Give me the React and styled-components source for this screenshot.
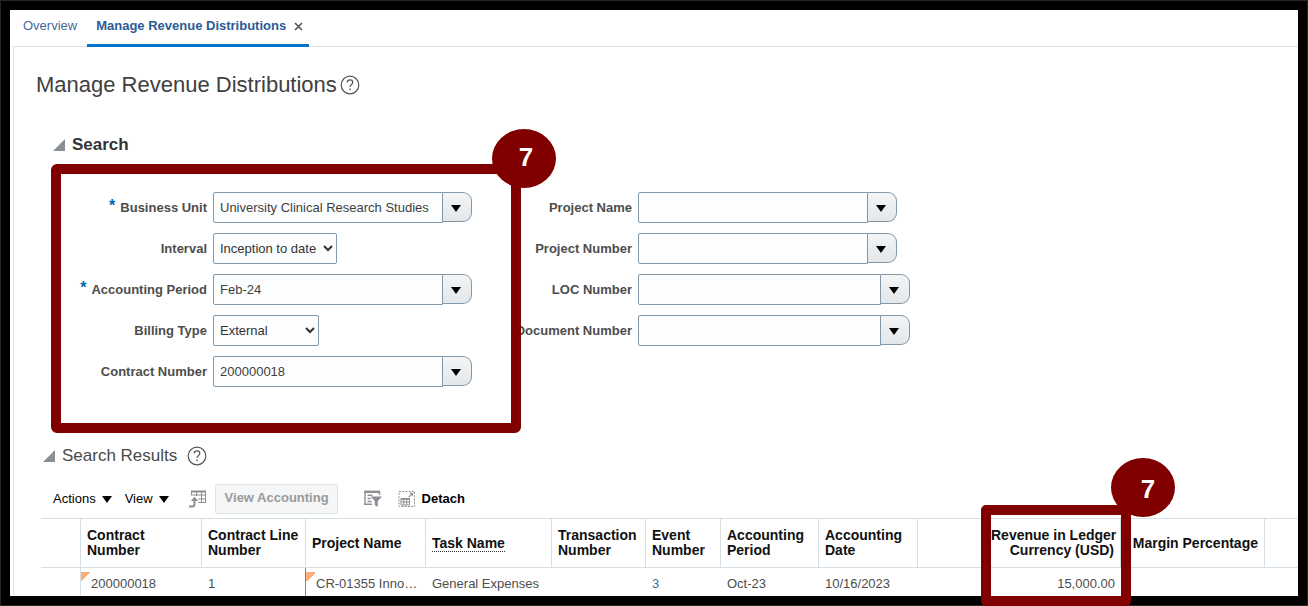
import React, { useState } from 'react';
import styled, { createGlobalStyle } from 'styled-components';

const GlobalStyle = createGlobalStyle`
  * {
    box-sizing: border-box;
  }
  body {
    margin: 0;
    background-color: #ffffff;
    font-family: 'Liberation Sans', Arial, sans-serif;
    font-size: 13px;
    line-height: 20px;
    color: #4d4d4d;
  }
  button, input, select {
    font: inherit;
    margin: 0;
  }
`;

const Frame = styled.div`
  min-height: 100vh;
  display: flex;
  flex-direction: column;
  border: 10px solid #000000;
  outline: 1px solid #262626;
  outline-offset: -1px;
`;

const TabBar = styled.nav`
  display: flex;
  height: 37px;
  padding-left: 3px;
`;

const Tab = styled.div`
  display: flex;
  align-items: flex-start;
  gap: 8px;
  padding: 6px ${({ $active }) => ($active ? '6px' : '10px')} 0
    ${({ $active }) => ($active ? '9px' : '10px')};
  border-bottom: 3px solid ${({ $active }) => ($active ? '#0572ce' : 'transparent')};
  position: relative;
`;

const TabLink = styled.a`
  color: ${({ $active }) => ($active ? '#2a5c96' : '#45699b')};
  font-weight: ${({ $active }) => ($active ? 'bold' : 'normal')};
  text-decoration: none;
`;

const CloseButton = styled.button`
  display: flex;
  align-items: center;
  height: 21px;
  padding: 0;
  border: none;
  background: none;
`;

const Panel = styled.main`
  flex: 1;
  margin: -1px 0 0 3px;
  padding-top: 23px;
  border-top: 1px solid #dbe3ea;
  border-left: 1px solid #dbe3ea;
`;

const PageTitle = styled.h1`
  display: flex;
  align-items: center;
  gap: 3px;
  margin: 0 0 35px 22px;
  font-size: 22px;
  font-weight: normal;
  line-height: 30px;
  color: #404040;
`;

const HelpButton = styled.button`
  display: flex;
  padding: 0;
  border: none;
  background: none;
`;

const SectionHeader = styled.div`
  display: flex;
  align-items: center;
  gap: 7px;
  height: 20px;
  margin-left: ${({ $indent }) => $indent};
`;

const SectionTitle = styled.h2`
  margin: 0 3px 0 0;
  font-size: 17px;
  font-weight: ${({ $bold }) => ($bold ? 'bold' : 'normal')};
  line-height: 20px;
  color: ${({ $bold }) => ($bold ? '#333333' : '#4a4a4a')};
`;

const DiscloseButton = styled.button`
  display: flex;
  padding: 0;
  border: none;
  background: none;
`;

const SearchForm = styled.form`
  display: flex;
  align-items: flex-start;
  margin: 9px 0 13px 37px;
`;

const SearchHighlight = styled.div`
  position: relative;
  z-index: 1;
  width: 470px;
  padding: 18px 0 36px;
  border: 10px solid #800000;
  border-radius: 6px;
`;

const Fields = styled.div`
  display: grid;
  grid-template-columns: ${({ $labelWidth }) => $labelWidth} auto;
  justify-content: start;
  align-items: center;
  gap: 10px 6px;
`;

const OtherFields = styled.div`
  margin: 28px 0 0 -10px;
`;

const Label = styled.label`
  display: flex;
  justify-content: flex-end;
  gap: 5px;
  font-weight: bold;
  white-space: nowrap;
`;

const Required = styled.span`
  font-size: 16px;
  line-height: 16px;
  color: #0066b3;
`;

const Combo = styled.div`
  display: flex;
  height: 31px;
`;

const ComboInput = styled.input`
  width: ${({ $wide }) => ($wide ? '243px' : '230px')};
  padding: 0 6px;
  border: 1px solid #8398a9;
  border-radius: 2px 0 0 2px;
  background-color: #fcfdfe;
  color: #404040;
`;

const ComboButton = styled.button`
  display: flex;
  align-items: center;
  justify-content: center;
  width: 29px;
  height: 30px;
  padding: 3px 3px 0 0;
  border: 1px solid #8398a9;
  border-left: none;
  border-radius: 0 9px 9px 0;
  background: linear-gradient(#f3f5f6, #e3e7ea);
`;

const Select = styled.select`
  width: ${({ $width }) => $width};
  height: 31px;
  padding: 0 2px;
  border: 1px solid #8398a9;
  border-radius: 2px;
  background-color: #fcfdfe;
  color: #333333;
`;

const Badge = styled.span`
  position: absolute;
  top: ${({ $top }) => $top};
  right: ${({ $right }) => $right};
  display: flex;
  align-items: center;
  justify-content: center;
  width: 64px;
  height: 59px;
  padding: ${({ $pad }) => $pad};
  border-radius: 50%;
  background-color: #800000;
  color: #ffffff;
  font-size: 26px;
  font-weight: bold;
  line-height: 30px;
`;

const Toolbar = styled.div`
  display: flex;
  align-items: center;
  height: 30px;
  margin: 18px 0 4px 39px;
`;

const Menus = styled.div`
  display: flex;
  gap: 13px;
  margin-right: 20px;
`;

const MenuButton = styled.button`
  display: flex;
  align-items: center;
  gap: 6px;
  padding: 0;
  border: none;
  background: none;
  color: #000000;
`;

const IconButton = styled.button`
  display: flex;
  align-items: center;
  gap: 6px;
  padding: 0;
  border: none;
  background: none;
  color: #000000;
  font-weight: bold;
`;

const AccountingButton = styled.button`
  height: 30px;
  margin: 0 26px 0 8px;
  padding: 0 8px 2px 9px;
  border: 1px solid #dfe4e7;
  border-radius: 2px;
  background-color: #f4f6f7;
  color: #9a9a9a;
  font-weight: bold;
`;

const DetachButton = styled(IconButton)`
  margin-left: 16px;
`;

const ResultsWrap = styled.div`
  margin-left: 27px;
`;

const Table = styled.table`
  width: 100%;
  table-layout: fixed;
  border-collapse: separate;
  border-spacing: 0;
`;

const Col = styled.col`
  width: ${({ $width }) => $width};
`;

const Th = styled.th`
  position: relative;
  height: 50px;
  padding: 0 6px;
  border-top: 1px solid #d6dfe6;
  border-bottom: 1px solid #d6dfe6;
  border-right: ${({ $last }) => ($last ? 'none' : '1px solid #d6dfe6')};
  font-size: 14px;
  font-weight: bold;
  line-height: 15px;
  text-align: ${({ $align }) => $align || 'left'};
  white-space: pre;
  color: #111111;
`;

const HeaderHint = styled.span`
  border-bottom: 1px dotted #333333;
`;

const Td = styled.td`
  height: 28px;
  padding: 6px 6px 2px ${({ $changed }) => ($changed ? '10px' : '6px')};
  white-space: nowrap;
  text-align: ${({ $align }) => $align || 'left'};
  border-right: ${({ $edge }) => ($edge ? `1px solid ${$edge}` : 'none')};
  background: ${({ $changed }) =>
    $changed
      ? 'linear-gradient(135deg, #fbae75 50%, transparent 50%) 0 4px / 10px 10px no-repeat'
      : 'none'};
`;

const CellLink = styled.a`
  color: #3a6ea5;
  text-decoration: none;
`;

// outlines a header together with the cell below it
const ColumnHighlight = styled.div`
  position: absolute;
  z-index: 1;
  top: -14px;
  left: -4px;
  right: -11px;
  height: 101px;
  border: 10px solid #800000;
  border-radius: 5px;
`;

const Caret = () => (
  <svg width="10" height="7" viewBox="0 0 10 7" aria-hidden="true">
    <path d="M0 0h10L5 7z" fill="#000000" />
  </svg>
);

const Help = () => (
  <HelpButton type="button" aria-label="Help">
    <svg width="20" height="20" viewBox="0 0 20 20" fill="none" stroke="#555555">
      <circle cx="10" cy="10" r="8.8" strokeWidth="1.2" />
      <path
        d="M7.2 7.6c0-1.6 1.2-2.7 2.8-2.7s2.8 1 2.8 2.5c0 2.2-2.8 2.2-2.8 4.6"
        strokeWidth="1.2"
      />
      <path d="M10 13.6v1.6" strokeWidth="1.3" />
    </svg>
  </HelpButton>
);

const Disclose = ({ label, open, onClick }) => (
  <DiscloseButton type="button" aria-label={label} aria-expanded={open} onClick={onClick}>
    <svg width="12" height="12" viewBox="0 0 12 12">
      <path d="M12 0v12H0z" fill="#8a8f93" />
    </svg>
  </DiscloseButton>
);

const ExportIcon = () => (
  <svg width="18" height="18" viewBox="0 0 18 18" fill="none" stroke="#8b8f93">
    <path d="M2 1.5h15" strokeWidth="2" />
    <path d="M2.5 1v4M7.5 1v5M12.5 1v12M16.5 1v12M2 5h15M9 9h8M9 12.5h8" />
    <path d="M0 16.5h3q2.5 0 2.5-2.5V10" strokeWidth="2" />
    <path d="M1.8 11l3.7-4.2L9.2 11z" fill="#8b8f93" stroke="none" />
  </svg>
);

const FilterIcon = () => (
  <svg width="18" height="18" viewBox="0 0 18 18" fill="none" stroke="#8b8f93">
    <path d="M0 1.8h16" strokeWidth="2.4" />
    <path d="M1 1v14M15.5 1v4M3.5 5.2h5M3.5 8.5h3M3.5 11.5h4M0 14.3h8" strokeWidth="1.4" />
    <path d="M6.5 6.5H18l-4.2 4.6V17l-3-2v-3.9z" fill="#8b8f93" stroke="none" />
  </svg>
);

const DetachIcon = () => (
  <svg width="18" height="18" viewBox="0 0 18 18" fill="none" stroke="#8b8f93">
    <path d="M1 1.5h15.5v15H1z" strokeDasharray="2 1.2" />
    <path d="M3 8.5h8.5v6.5H3zM3 9.3h8.5M3 12h8.5M5.8 9v6M8.7 9v6" />
    <path d="M10.8 7.2l3-3" strokeWidth="1.2" />
    <path d="M11.3 2.8H15v3.7z" fill="#8b8f93" stroke="none" />
  </svg>
);

const ComboField = ({ id, label, required, value, wide }) => (
  <>
    <Label htmlFor={id}>
      {required && <Required>*</Required>}
      {label}
    </Label>
    <Combo>
      <ComboInput id={id} type="text" defaultValue={value} $wide={wide} />
      <ComboButton type="button" aria-label={`Search ${label}`}>
        <Caret />
      </ComboButton>
    </Combo>
  </>
);

const SelectField = ({ id, label, options, width }) => (
  <>
    <Label htmlFor={id}>{label}</Label>
    <Combo>
      <Select id={id} $width={width}>
        {options.map((option) => (
          <option key={option}>{option}</option>
        ))}
      </Select>
    </Combo>
  </>
);

const columnWidths = [40, 121, 104, 120, 126, 94, 75, 98, 99, 67, 136, 144];

const App = () => {
  const [searchOpen, setSearchOpen] = useState(true);
  const [resultsOpen, setResultsOpen] = useState(true);

  return (
    <Frame>
      <GlobalStyle />
      <TabBar>
        <Tab>
          <TabLink href="#overview">Overview</TabLink>
        </Tab>
        <Tab $active>
          <TabLink href="#distributions" $active>
            Manage Revenue Distributions
          </TabLink>
          <CloseButton type="button" aria-label="Close tab">
            <svg width="9" height="9" viewBox="0 0 9 9" stroke="#555555" strokeWidth="1.6">
              <path d="M1 1l7 7M8 1L1 8" />
            </svg>
          </CloseButton>
        </Tab>
      </TabBar>
      <Panel>
        <PageTitle>
          Manage Revenue Distributions
          <Help />
        </PageTitle>

        <SectionHeader $indent="39px">
          <Disclose
            label="Toggle search"
            open={searchOpen}
            onClick={() => setSearchOpen((prev) => !prev)}
          />
          <SectionTitle $bold>Search</SectionTitle>
        </SectionHeader>
        {searchOpen && (
          <SearchForm>
            <SearchHighlight>
              <Fields $labelWidth="146px">
                <ComboField
                  id="businessUnit"
                  label="Business Unit"
                  value="University Clinical Research Studies"
                  required
                />
                <SelectField
                  id="interval"
                  label="Interval"
                  options={['Inception to date']}
                  width="124px"
                />
                <ComboField id="period" label="Accounting Period" value="Feb-24" required />
                <SelectField
                  id="billingType"
                  label="Billing Type"
                  options={['External', 'Internal']}
                  width="106px"
                />
                <ComboField id="contract" label="Contract Number" value="200000018" />
              </Fields>
              <Badge $top="-45px" $right="-45px" $pad="0 0 4px 4px">
                7
              </Badge>
            </SearchHighlight>
            <OtherFields>
              <Fields $labelWidth="121px">
                <ComboField id="projectName" label="Project Name" />
                <ComboField id="projectNumber" label="Project Number" />
                <ComboField id="locNumber" label="LOC Number" wide />
                <ComboField id="documentNumber" label="Document Number" wide />
              </Fields>
            </OtherFields>
          </SearchForm>
        )}

        <SectionHeader $indent="29px">
          <Disclose
            label="Toggle search results"
            open={resultsOpen}
            onClick={() => setResultsOpen((prev) => !prev)}
          />
          <SectionTitle>Search Results</SectionTitle>
          <Help />
        </SectionHeader>
        {resultsOpen && (
          <>
            <Toolbar>
              <Menus>
                <MenuButton type="button">
                  Actions
                  <Caret />
                </MenuButton>
                <MenuButton type="button">
                  View
                  <Caret />
                </MenuButton>
              </Menus>
              <IconButton type="button" aria-label="Export to Excel">
                <ExportIcon />
              </IconButton>
              <AccountingButton type="button" disabled>
                View Accounting
              </AccountingButton>
              <IconButton type="button" aria-label="Query by example">
                <FilterIcon />
              </IconButton>
              <DetachButton type="button">
                <DetachIcon />
                Detach
              </DetachButton>
            </Toolbar>
            <ResultsWrap>
              <Table>
                <colgroup>
                  {columnWidths.map((width, idx) => (
                    <Col key={idx} $width={`${width}px`} />
                  ))}
                  <col />
                </colgroup>
                <thead>
                  <tr>
                    <Th />
                    <Th>{'Contract\nNumber'}</Th>
                    <Th>{'Contract Line\nNumber'}</Th>
                    <Th>Project Name</Th>
                    <Th>
                      <HeaderHint>Task Name</HeaderHint>
                    </Th>
                    <Th>{'Transaction\nNumber'}</Th>
                    <Th>{'Event\nNumber'}</Th>
                    <Th>{'Accounting\nPeriod'}</Th>
                    <Th>{'Accounting\nDate'}</Th>
                    <Th />
                    <Th $align="right">
                      {'Revenue in Ledger\nCurrency (USD)'}
                      <ColumnHighlight>
                        <Badge $top="-57px" $right="-54px" $pad="2px 0 0 10px">
                          7
                        </Badge>
                      </ColumnHighlight>
                    </Th>
                    <Th $align="right">Margin Percentage</Th>
                    <Th $last />
                  </tr>
                </thead>
                <tbody>
                  <tr>
                    <Td $edge="#d6dfe6" />
                    <Td $changed>200000018</Td>
                    <Td $edge="#26a3bd">1</Td>
                    <Td $changed>CR-01355 Inno…</Td>
                    <Td>General Expenses</Td>
                    <Td />
                    <Td>
                      <CellLink href="#event">3</CellLink>
                    </Td>
                    <Td>Oct-23</Td>
                    <Td>10/16/2023</Td>
                    <Td />
                    <Td $align="right">15,000.00</Td>
                    <Td />
                    <Td />
                  </tr>
                </tbody>
              </Table>
            </ResultsWrap>
          </>
        )}
      </Panel>
    </Frame>
  );
};

export default App;
